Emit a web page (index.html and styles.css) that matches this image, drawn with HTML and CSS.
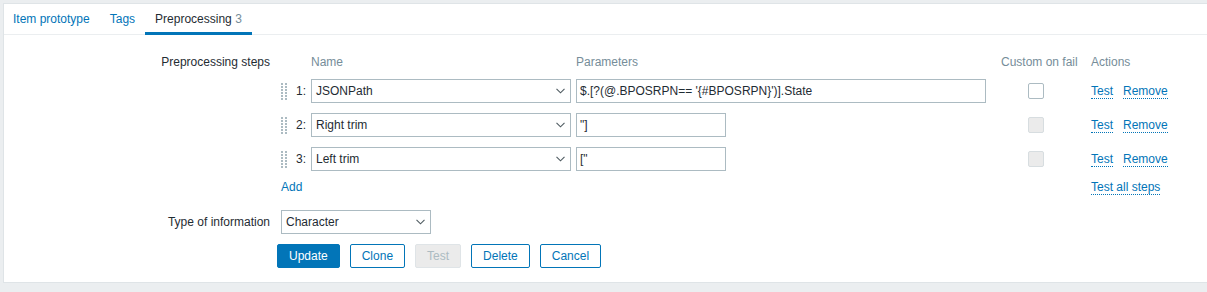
FILE: index.html
```html
<html>
<head>
  <title>Item prototype - Preprocessing</title>
  <link rel="stylesheet" href="styles.css">
</head>
<body>
  <div class="page">
    <div class="tabs">
      <a class="tab">Item prototype</a>
      <a class="tab">Tags</a>
      <a class="tab active">Preprocessing <span class="count">3</span></a>
    </div>

    <div class="form">
      <div class="form-row">
        <label class="form-label">Preprocessing steps</label>
        <div class="steps">
          <div class="step step-head">
            <span></span>
            <span>Name</span>
            <span>Parameters</span>
            <span>Custom on fail</span>
            <span>Actions</span>
          </div>

          <div class="step">
            <span class="step-num"><span class="drag"></span>1:</span>
            <span class="select wide"><span>JSONPath</span><svg width="9" height="6" viewBox="0 0 9 6"><path d="M0.5 0.8 L4.5 4.8 L8.5 0.8" fill="none" stroke="#4f5b61" stroke-width="1.1"/></svg></span>
            <span><span class="input long">$.[?(@.BPOSRPN== '{#BPOSRPN}')].State</span></span>
            <span><span class="check"></span></span>
            <span><a class="link">Test</a><a class="link gap">Remove</a></span>
          </div>

          <div class="step">
            <span class="step-num"><span class="drag"></span>2:</span>
            <span class="select wide"><span>Right trim</span><svg width="9" height="6" viewBox="0 0 9 6"><path d="M0.5 0.8 L4.5 4.8 L8.5 0.8" fill="none" stroke="#4f5b61" stroke-width="1.1"/></svg></span>
            <span><span class="input short">"]</span></span>
            <span><span class="check disabled"></span></span>
            <span><a class="link">Test</a><a class="link gap">Remove</a></span>
          </div>

          <div class="step">
            <span class="step-num"><span class="drag"></span>3:</span>
            <span class="select wide"><span>Left trim</span><svg width="9" height="6" viewBox="0 0 9 6"><path d="M0.5 0.8 L4.5 4.8 L8.5 0.8" fill="none" stroke="#4f5b61" stroke-width="1.1"/></svg></span>
            <span><span class="input short">["</span></span>
            <span><span class="check disabled"></span></span>
            <span><a class="link">Test</a><a class="link gap">Remove</a></span>
          </div>

          <div class="step step-foot">
            <a class="add">Add</a>
            <span><a class="link">Test all steps</a></span>
          </div>
        </div>
      </div>

      <div class="form-row">
        <label class="form-label">Type of information</label>
        <div>
          <span class="select narrow"><span>Character</span><svg width="9" height="6" viewBox="0 0 9 6"><path d="M0.5 0.8 L4.5 4.8 L8.5 0.8" fill="none" stroke="#4f5b61" stroke-width="1.1"/></svg></span>
        </div>
      </div>

      <div class="buttons">
        <button class="btn primary">Update</button>
        <button class="btn">Clone</button>
        <button class="btn disabled">Test</button>
        <button class="btn">Delete</button>
        <button class="btn">Cancel</button>
      </div>
    </div>
  </div>
</body>
</html>
```

FILE: styles.css
```css
body {
  margin: 0;
  background: #ebeef0;
  font: 12px "Liberation Sans", Arial, sans-serif;
  color: #1f2c33;
}
.page {
  margin: 3px 0 0 3px;
  background: #fff;
  border: 1px solid #dfe4e7;
  border-right: 0;
  padding-bottom: 14px;
}

/* tabs */
.tabs {
  display: flex;
  height: 30px;
  border-bottom: 1px solid #ebeef0;
}
.tab {
  position: relative;
  padding: 0 10px;
  line-height: 30px;
  color: #0275b8;
}
.tab:first-child {
  margin-left: -1px;
}
.tab.active {
  color: #1f2c33;
}
.tab.active::after {
  content: "";
  position: absolute;
  left: 0;
  right: 0;
  bottom: -1px;
  height: 3px;
  background: #0275b8;
}
.count {
  color: #768d99;
}

/* form */
.form {
  padding-top: 15px;
}
.form-row {
  display: grid;
  grid-template-columns: 266px auto;
  column-gap: 11px;
}
.form-row + .form-row {
  margin-top: 15px;
}
.form-label {
  text-align: right;
  line-height: 24px;
}

.step {
  display: grid;
  grid-template-columns: 30px 265px 425px 90px auto;
  align-items: center;
  height: 24px;
  margin-bottom: 10px;
}
.step-head {
  color: #768d99;
  margin-bottom: 5px;
}
.step-num {
  display: flex;
  align-items: center;
  justify-content: space-between;
  padding-right: 5px;
}
.drag {
  width: 6px;
  height: 17px;
  background:
    linear-gradient(transparent 2px, #fff 2px) 0 0 / 100% 3px,
    linear-gradient(90deg, #acbbc2 2px, #fff 2px 4px, #acbbc2 4px);
}
.step-foot {
  height: 14px;
  line-height: 12px;
  margin-bottom: 0;
  align-items: start;
}
.step-foot .add {
  grid-column: 1 / 5;
  color: #0275b8;
}

.select {
  display: flex;
  align-items: center;
  justify-content: space-between;
  box-sizing: border-box;
  height: 24px;
  border: 1px solid #acbbc2;
  padding: 0 5px 0 4px;
}
.select.wide {
  width: 260px;
}
.select.narrow {
  width: 150px;
}
.input {
  display: flex;
  align-items: center;
  box-sizing: border-box;
  height: 24px;
  border: 1px solid #acbbc2;
  padding: 0 3px;
}
.input.long {
  width: 410px;
}
.input.short {
  width: 150px;
}
.check {
  display: block;
  box-sizing: border-box;
  width: 16px;
  height: 16px;
  margin-left: 27px;
  border: 1px solid #acbbc2;
  border-radius: 2px;
}
.check.disabled {
  background: #ebebeb;
  border-color: #d7dde0;
}
.link {
  color: #0275b8;
  border-bottom: 1px dotted #0275b8;
}
.link.gap {
  margin-left: 10px;
}

/* buttons */
.buttons {
  display: flex;
  gap: 10px;
  margin-top: 10px;
  padding-left: 273px;
}
.btn {
  height: 24px;
  padding: 0 11px;
  font: 12px "Liberation Sans", Arial, sans-serif;
  color: #0275b8;
  background: #fff;
  border: 1px solid #0275b8;
  border-radius: 2px;
}
.btn.primary {
  color: #fff;
  background: #0275b8;
}
.btn.disabled {
  color: #acbbc2;
  background: #ebebeb;
  border-color: #dfe4e7;
}
```
